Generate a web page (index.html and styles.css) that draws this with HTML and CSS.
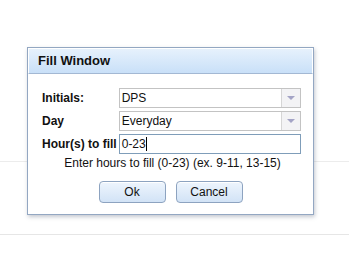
FILE: index.html
```html
<!doctype html>
<html lang="en">
    <head>
        <meta charset="UTF-8" />
        <title>Fill Window</title>
        <link rel="stylesheet" href="styles.css">
    </head>
    <body>
        <div class="page">
            <div class="page-row page-row--first"></div>
            <div class="page-row page-row--last"></div>
        </div>

        <div class="dialog">
            <div class="dialog-header">Fill Window</div>
            <div class="dialog-body">
                <div class="form-row">
                    <label class="form-label">Initials:</label>
                    <div class="select">
                        <span class="select-value">DPS</span>
                        <span class="select-arrow"></span>
                    </div>
                </div>
                <div class="form-row">
                    <label class="form-label">Day</label>
                    <div class="select">
                        <span class="select-value">Everyday</span>
                        <span class="select-arrow"></span>
                    </div>
                </div>
                <div class="form-row">
                    <label class="form-label">Hour(s) to fill</label>
                    <div class="text-input">0-23<span class="caret"></span></div>
                </div>
                <div class="hint">Enter hours to fill (0-23) (ex. 9-11, 13-15)</div>
                <div class="buttons">
                    <button class="btn">Ok</button>
                    <button class="btn">Cancel</button>
                </div>
            </div>
        </div>
    </body>
</html>
```

FILE: styles.css
```css
* {
    padding: 0;
    margin: 0;
    box-sizing: border-box;
}

body {
    font-family: "Liberation Sans", Arial, sans-serif;
    font-size: 12px;
    color: #111;
    background: #fff;
    width: 349px;
    height: 254px;
    overflow: hidden;
}

.page {
    padding-top: 161px;
}

.page-row {
    height: 73px;
    border-top: 1px solid #e6e6e6;
}

.page-row--first {
    border-top-color: #ececec;
}

.page-row--last {
    height: 19px;
}

.dialog {
    position: absolute;
    left: 27px;
    top: 47px;
    width: 287px;
    height: 168px;
    background: #fff;
    border: 1px solid #93a7c2;
    box-shadow: 1px 2px 4px rgba(90, 100, 120, 0.35);
}

.dialog-header {
    height: 26px;
    border: 1px solid #fff;
    border-bottom: 1px solid #a3b8d3;
    background: linear-gradient(#e6f1fc, #c9e0f8);
    padding-left: 9px;
    font-size: 13px;
    font-weight: 700;
    line-height: 23px;
    color: #111;
}

.dialog-body {
    padding: 14px 12px 0 14px;
}

.form-row {
    display: flex;
    align-items: center;
    height: 20px;
    margin-bottom: 3px;
}

.form-label {
    width: 77px;
    font-weight: 700;
    font-size: 12px;
}

.select,
.text-input {
    width: 183px;
    height: 20px;
    display: flex;
    align-items: center;
}

.select {
    border: 1px solid #c3c3c3;
}

.select-value {
    flex: 1;
    padding-left: 2px;
}

.select-arrow {
    width: 19px;
    height: 18px;
    border-left: 1px solid #d6d6d6;
    background: #f3f3f5;
    display: flex;
    align-items: center;
    justify-content: center;
}

.select-arrow::after {
    content: "";
    border-left: 4px solid transparent;
    border-right: 4px solid transparent;
    border-top: 4px solid #a4a4c6;
}

.text-input {
    border: 1px solid #7f9db9;
    padding-left: 2px;
}

.caret {
    display: inline-block;
    width: 1px;
    height: 14px;
    background: #000;
}

.hint {
    text-align: center;
    margin-top: -1px;
    padding-left: 2px;
    line-height: 14px;
}

.buttons {
    display: flex;
    justify-content: center;
    gap: 10px;
    margin-top: 11px;
    padding-right: 2px;
}

.btn {
    width: 67px;
    height: 22px;
    font-family: inherit;
    font-size: 12px;
    color: #111;
    border: 1px solid #8da3c0;
    border-radius: 4px;
    background: linear-gradient(#eef5fd, #d2e3f6);
    box-shadow: inset 0 1px 0 #fff;
}
```
